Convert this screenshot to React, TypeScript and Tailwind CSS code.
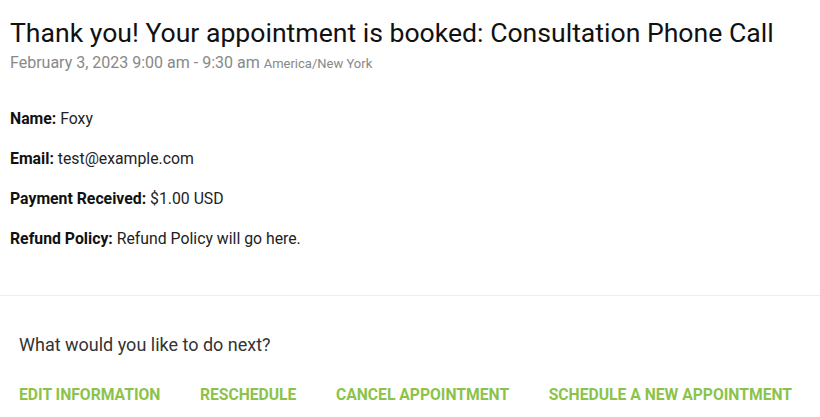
import React from "react";

export default function App() {
  const rows: [string, string][] = [
    ["Name:", "Foxy"],
    ["Email:", "test@example.com"],
    ["Payment Received:", "$1.00 USD"],
    ["Refund Policy:", "Refund Policy will go here."],
  ];
  const actions = ["EDIT INFORMATION", "RESCHEDULE", "CANCEL APPOINTMENT", "SCHEDULE A NEW APPOINTMENT"];
  return (
    <div className="w-[820px] h-[417px] bg-white overflow-hidden" style={{ fontFamily: "Roboto, sans-serif" }}>
      <div className="px-[10px] pt-[17px]">
        <h1 className="text-[26.6px] leading-[32px] text-[#111] font-normal whitespace-nowrap">
          Thank you! Your appointment is booked: Consultation Phone Call
        </h1>
        <div className="mt-[4px] text-[16px] leading-[20px] text-[#888]">
          February 3, 2023 9:00 am - 9:30 am <span className="text-[13px]">America/New York</span>
        </div>
        <div className="mt-[35px] flex flex-col gap-[20px] text-[15.8px] leading-[20px] text-[#222]">
          {rows.map(([k, v]) => (
            <div key={k}>
              <span className="font-bold text-[#111]">{k}</span> {v}
            </div>
          ))}
        </div>
      </div>
      <div className="mt-[46px] border-t border-[#eee]" />
      <div className="px-[19px] pt-[38px]">
        <div className="text-[18px] leading-[22px] text-[#333]">What would you like to do next?</div>
        <div className="mt-[29px] flex flex-nowrap gap-[39.5px] text-[15.7px] leading-[20px] font-bold text-[#8bc34a]">
          {actions.map((a) => (
            <span key={a} className="whitespace-nowrap shrink-0">
              {a}
            </span>
          ))}
        </div>
      </div>
    </div>
  );
}
